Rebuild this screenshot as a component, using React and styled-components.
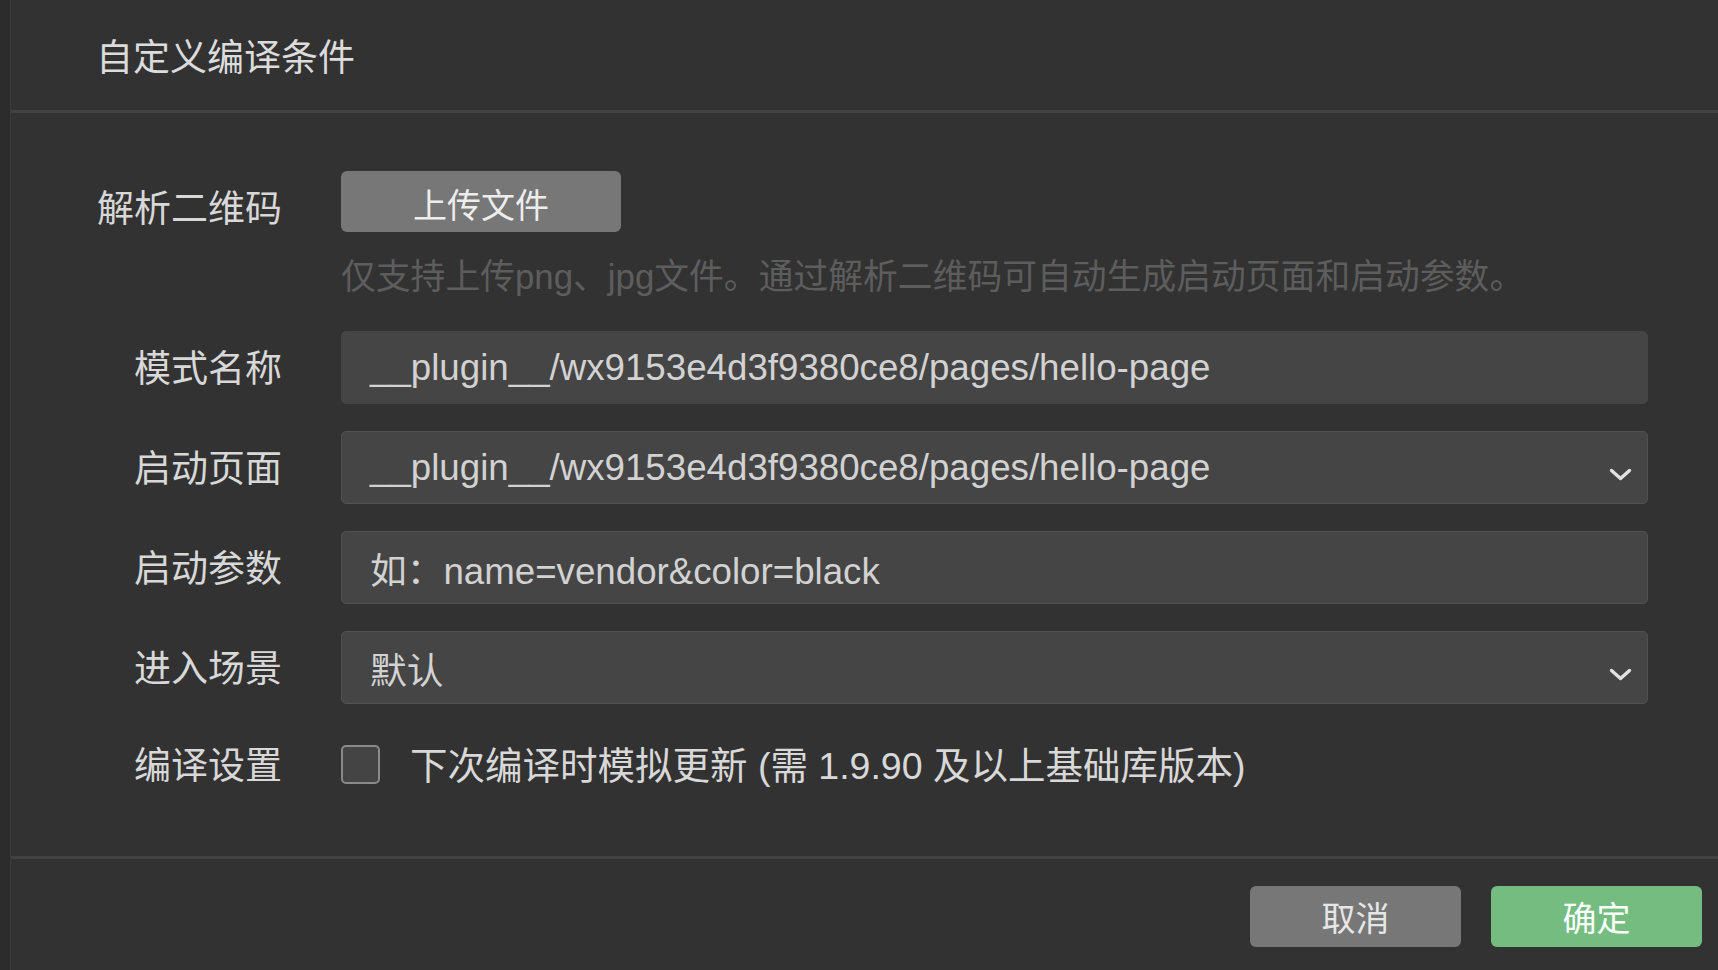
import React from 'react';
import styled, { createGlobalStyle } from 'styled-components';

const GlobalStyle = createGlobalStyle`
  html, body {
    margin: 0;
    padding: 0;
    height: 100%;
    background: #323232;
    overflow: hidden;
  }
  #root {
    height: 100%;
  }
`;

const Shell = styled.div`
  display: flex;
  height: 100vh;
  font-family: 'Liberation Sans', 'Noto Sans CJK SC', sans-serif;
  color: #d8d8d8;
`;

const SideStrip = styled.div`
  width: 10px;
  flex-shrink: 0;
  background: #2c2c2c;
  border-right: 1px solid #3a3a3a;
`;

const Main = styled.div`
  flex: 1;
  display: flex;
  flex-direction: column;
  min-width: 0;
`;

const Header = styled.header`
  height: 110px;
  display: flex;
  align-items: center;
  padding-left: 85px;
  border-bottom: 3px solid #424242;
`;

const Title = styled.h1`
  margin: 0;
  font-size: 37px;
  font-weight: 400;
  color: #dcdcdc;
`;

const Form = styled.div`
  padding: 58px 70px 0 0;
`;

const Row = styled.div`
  display: grid;
  grid-template-columns: 271px 1fr;
  column-gap: 59px;
  align-items: ${p => (p.top ? 'start' : 'center')};
  margin-top: ${p => p.gap || 0}px;
`;

const Label = styled.div`
  text-align: right;
  font-size: 37px;
  color: #d8d8d8;
  line-height: ${p => p.lh || 40}px;
  padding-top: ${p => p.pt || 5}px;
`;

const Field = styled.div`
  display: flex;
  flex-direction: column;
  align-items: flex-start;
`;

const UploadButton = styled.button`
  width: 280px;
  height: 61px;
  border: none;
  border-radius: 6px;
  background: #777777;
  color: #ededed;
  font-family: inherit;
  font-size: 34px;
  padding: 4px 0 0;
`;

const Hint = styled.div`
  margin-top: 25px;
  font-size: 34.8px;
  line-height: 40px;
  color: #5d5d5d;
  white-space: nowrap;
`;

const Box = styled.div`
  height: 73px;
  box-sizing: border-box;
  display: flex;
  align-items: center;
  justify-content: space-between;
  padding: 0 15px 0 28px;
  background: #454545;
  border: 1.5px solid ${p => (p.plain ? '#454545' : '#515151')};
  border-radius: 5px;
  font-size: 36.7px;
  color: #d2d2d2;
  white-space: nowrap;
`;

const Chevron = styled.svg`
  width: 23px;
  height: 13px;
  margin-top: 14px;
  flex-shrink: 0;
`;

const CheckLine = styled.label`
  display: flex;
  align-items: center;
  height: 40px;
`;

const Checkbox = styled.span`
  width: 39px;
  height: 39px;
  box-sizing: border-box;
  border: 2px solid #8a8a8a;
  border-radius: 5px;
  background: #444444;
  flex-shrink: 0;
`;

const CheckText = styled.span`
  margin-left: 30px;
  padding-bottom: 4px;
  font-size: 37.5px;
  color: #d8d8d8;
  white-space: nowrap;
`;

const Footer = styled.footer`
  margin-top: auto;
  border-top: 3px solid #424242;
  display: flex;
  justify-content: flex-end;
  gap: 30px;
  padding: 27px 16px 23px 0;
`;

const Button = styled.button`
  width: 211px;
  height: 61px;
  border: none;
  border-radius: 6px;
  padding: 0;
  font-family: inherit;
  font-size: 34px;
  background: ${p => (p.primary ? '#74bc7f' : '#777777')};
  color: ${p => (p.primary ? '#ffffff' : '#e6e6e6')};
`;

const DownArrow = () => (
  <Chevron viewBox="0 0 23 13">
    <polyline
      points="2.5,2.5 11.5,10.5 20.5,2.5"
      fill="none"
      stroke="#e2e2e2"
      strokeWidth="3.4"
      strokeLinecap="round"
      strokeLinejoin="round"
    />
  </Chevron>
);

const pagePath = '__plugin__/wx9153e4d3f9380ce8/pages/hello-page';

export default function App() {
  return (
    <>
      <GlobalStyle />
      <Shell>
        <SideStrip />
        <Main>
          <Header>
            <Title>自定义编译条件</Title>
          </Header>
          <Form>
            <Row top>
              <Label lh={61} pt={8}>解析二维码</Label>
              <Field>
                <UploadButton>上传文件</UploadButton>
                <Hint>仅支持上传png、jpg文件。通过解析二维码可自动生成启动页面和启动参数。</Hint>
              </Field>
            </Row>
            <Row gap={34}>
              <Label>模式名称</Label>
              <Box plain>{pagePath}</Box>
            </Row>
            <Row gap={27}>
              <Label>启动页面</Label>
              <Box>
                <span>{pagePath}</span>
                <DownArrow />
              </Box>
            </Row>
            <Row gap={27}>
              <Label>启动参数</Label>
              <Box>如：name=vendor&amp;color=black</Box>
            </Row>
            <Row gap={27}>
              <Label>进入场景</Label>
              <Box>
                <span>默认</span>
                <DownArrow />
              </Box>
            </Row>
            <Row gap={38}>
              <Label>编译设置</Label>
              <CheckLine>
                <Checkbox />
                <CheckText>下次编译时模拟更新 (需 1.9.90 及以上基础库版本)</CheckText>
              </CheckLine>
            </Row>
          </Form>
          <Footer>
            <Button>取消</Button>
            <Button primary>确定</Button>
          </Footer>
        </Main>
      </Shell>
    </>
  );
}
